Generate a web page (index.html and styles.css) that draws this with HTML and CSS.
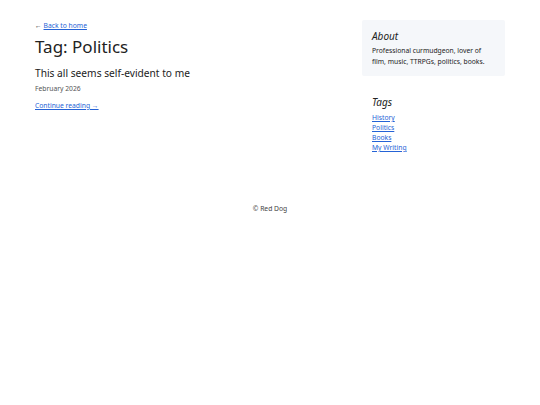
FILE: index.html
```html
<!DOCTYPE html>
<html lang="en">
<head>
<meta charset="utf-8">
<title>Tag: Politics</title>
<link rel="stylesheet" href="styles.css">
</head>
<body>
<div class="page">
  <div class="layout">
    <main class="main">
      <p class="back">← <a href="#">Back to home</a></p>
      <h1 class="title">Tag: Politics</h1>
      <article class="post">
        <h2 class="post-title">This all seems self-evident to me</h2>
        <p class="date">February 2026</p>
        <p class="more"><a href="#">Continue reading →</a></p>
      </article>
    </main>
    <aside class="sidebar">
      <section class="about">
        <h3 class="side-title">About</h3>
        <p class="about-text">Professional curmudgeon, lover of film, music, TTRPGs, politics, books.</p>
      </section>
      <section class="tags">
        <h3 class="side-title">Tags</h3>
        <ul class="tag-list">
          <li><a href="#">History</a></li>
          <li><a href="#">Politics</a></li>
          <li><a href="#">Books</a></li>
          <li><a href="#">My Writing</a></li>
        </ul>
      </section>
    </aside>
  </div>
  <footer class="footer">© Red Dog</footer>
</div>
</body>
</html>
```
FILE: styles.css
```css
* { box-sizing: border-box; }
html, body { margin: 0; padding: 0; background: #fff; }
body {
  font-family: "Noto Sans", "Open Sans", sans-serif;
  font-size: 6.75px;
  line-height: 10px;
  color: #222;
}
a { color: #2563d6; }
.page { padding: 20px 35px; }
.layout {
  display: grid;
  grid-template-columns: 1fr 143px;
  gap: 17px;
}
.main p { margin: 0; }
.main .back { margin-top: 1px; }
.title {
  font-size: 17px;
  font-weight: 400;
  margin: 4px 0 7px;
  line-height: 24px;
}
.post-title {
  font-size: 10.2px;
  font-weight: 400;
  margin: 0;
  line-height: 14px;
}
.main .date { color: #555; margin: 4px 0 7px; }
.sidebar { display: flex; flex-direction: column; gap: 19px; }
.about {
  background: #f5f7fa;
  padding: 9px 10px 9px;
  border-radius: 2px;
}
.side-title {
  font-size: 10px;
  font-style: italic;
  font-weight: 400;
  margin: 0 0 2px;
  line-height: 14px;
}
.tags .side-title { margin-bottom: 4px; }
.about-text { margin: 0; line-height: 11px; }
.tags { padding: 0 10px; }
.tag-list { list-style: none; margin: 0; padding: 0; }
.tag-list li { line-height: 10px; }
.footer {
  text-align: center;
  margin-top: 51px;
  color: #444;
}
```
